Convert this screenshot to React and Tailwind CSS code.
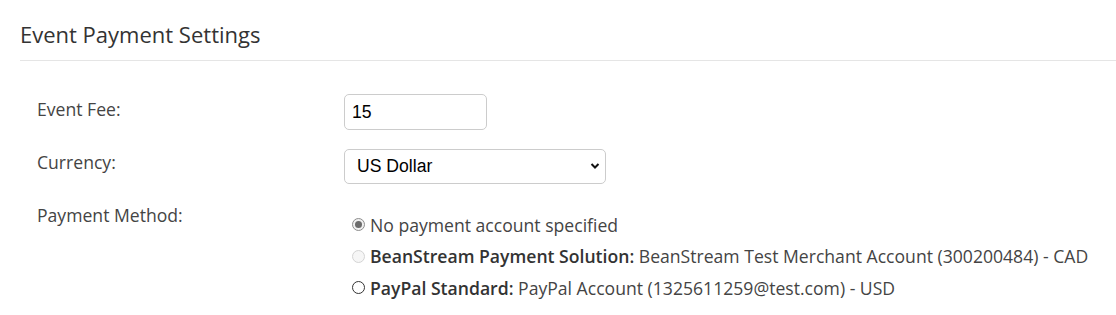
import React from 'react'

function Radio({ state }) {
  if (state === 'checked') {
    return (
      <span className="inline-flex h-[13px] w-[13px] items-center justify-center rounded-full border border-[#8d8d8d] bg-[#f0f0f0]">
        <span className="h-[7px] w-[7px] rounded-full bg-[#6b6b6b]" />
      </span>
    )
  }
  if (state === 'disabled') {
    return <span className="inline-block h-[13px] w-[13px] rounded-full border border-[#d4d4d4] bg-[#f6f6f6]" />
  }
  return <span className="inline-block h-[13px] w-[13px] rounded-full border border-[#333]" />
}

export default function App() {
  const methods = [
    { state: 'checked', label: null, text: 'No payment account specified' },
    { state: 'disabled', label: 'BeanStream Payment Solution:', text: 'BeanStream Test Merchant Account (300200484) - CAD' },
    { state: 'open', label: 'PayPal Standard:', text: 'PayPal Account (1325611259@test.com) - USD' },
  ]

  return (
    <div className="h-[315px] w-[1116px] bg-white pl-[20px] text-[#444] font-['Open_Sans',sans-serif]">
      <div className="border-b border-[#e5e5e5] pt-[19px] pb-[11px]">
        <h2 className="text-[22px] leading-[30px] text-[#333]">Event Payment Settings</h2>
      </div>

      <div className="pl-[17px]">
        <div className="mt-[33px] flex">
          <label className="w-[307px] pt-[3px] text-[17.6px] leading-[24px]">Event Fee:</label>
          <input
            defaultValue="15"
            className="h-[36px] w-[143px] rounded-[5px] border border-[#ccc] px-[7px] text-[17.6px] text-black font-['Liberation_Sans',Arial,sans-serif] outline-none"
          />
        </div>

        <div className="mt-[19px] flex">
          <label className="w-[307px] pt-[1px] text-[17.6px] leading-[24px]">Currency:</label>
          <div className="relative">
            <select className="h-[35px] w-[262px] appearance-none rounded-[5px] border border-[#ccc] bg-white px-[12px] text-[17.6px] text-black font-['Liberation_Sans',Arial,sans-serif] outline-none">
              <option>US Dollar</option>
              <option>Canadian Dollar</option>
            </select>
            <svg className="pointer-events-none absolute right-[6px] top-[13px]" width="10" height="8" viewBox="0 0 10 8">
              <path d="M1.5 2 L5 5.5 L8.5 2" fill="none" stroke="#111" strokeWidth="2" />
            </svg>
          </div>
        </div>

        <div className="mt-[19px] flex">
          <label className="w-[307px] text-[17.6px] leading-[24px]">Payment Method:</label>
          <div className="pt-[6px]">
            {methods.map((m, i) => (
              <div key={i} className="flex h-[31.5px] items-center gap-[5px] pl-[8px] text-[17.6px]">
                <Radio state={m.state} />
                <span>
                  {m.label && <b className="font-semibold text-[#333]">{m.label} </b>}
                  {m.text}
                </span>
              </div>
            ))}
          </div>
        </div>
      </div>
    </div>
  )
}
